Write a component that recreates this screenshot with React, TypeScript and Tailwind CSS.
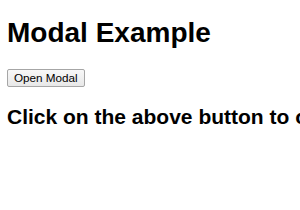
export default function App() {
  return (
    <div className="min-h-[210px] overflow-hidden bg-white px-[7px] pt-[17px] font-['Liberation_Sans',Arial,sans-serif] text-black">
      <h1 className="mb-[20px] text-[28px] font-bold leading-[32px]">Modal Example</h1>
      <button
        type="button"
        className="block h-[18px] rounded-[2px] border border-[#a6a6a6] bg-gradient-to-b from-[#f8f8f8] to-[#e8e8e8] px-[6px] text-[11.7px] leading-[14px] text-black"
      >
        Open Modal
      </button>
      <h2 className="mt-[18px] whitespace-nowrap text-[21px] font-bold leading-[24px]">
        Click on the above button to open the modal.
      </h2>
    </div>
  );
}
